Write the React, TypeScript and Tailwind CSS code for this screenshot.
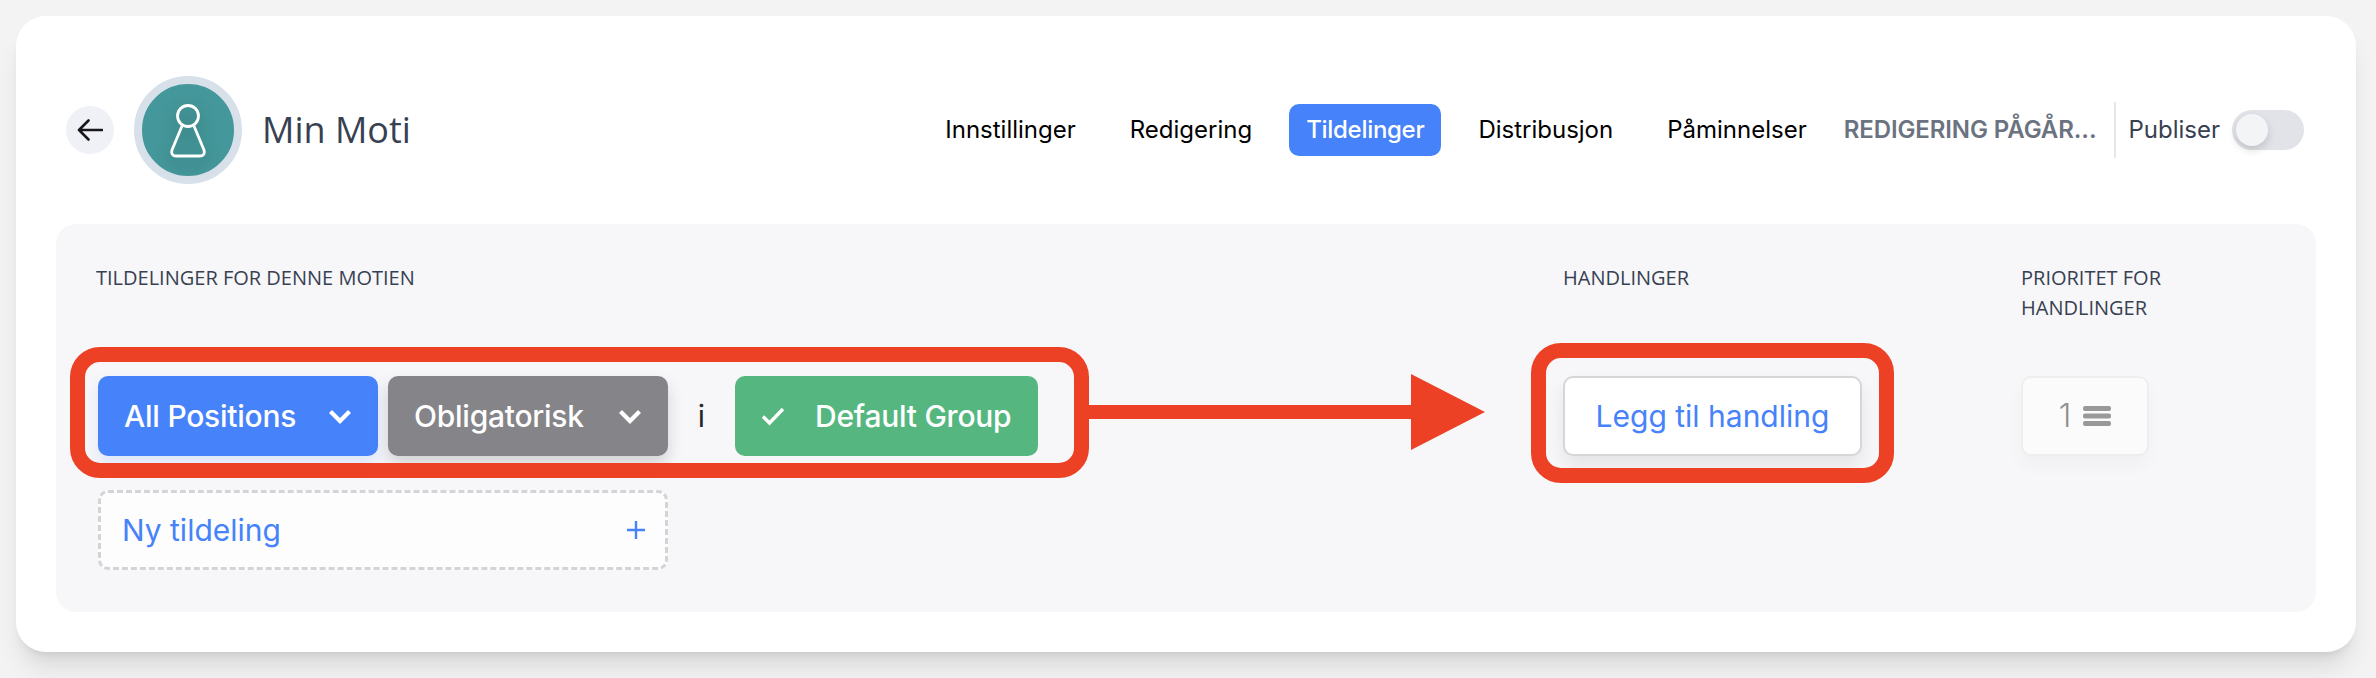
import React from "react";

const Chevron = () => (
  <svg width="24" height="15" viewBox="0 0 24 15" fill="none" className="shrink-0">
    <path d="M2.5 2.5 L12 12 L21.5 2.5" stroke="#fff" strokeWidth="4.2" />
  </svg>
);

const NavItem = ({ label, active }: { label: string; active?: boolean }) => (
  <div
    className={
      active
        ? "h-[52px] px-[17px] flex items-center rounded-[10px] bg-[#4682f9] text-white font-medium tracking-[-0.3px]"
        : "h-[52px] px-[17px] flex items-center text-black"
    }
  >
    {label}
  </div>
);

export default function App() {
  return (
    <div className="h-[678px] w-[2376px] overflow-hidden bg-[#f3f3f3] pl-4 pt-4 font-['Inter',sans-serif]">
      <div className="w-[2340px] rounded-[30px] bg-white pl-10 pr-10 pb-10 pt-[60px] shadow-xl">
        <header className="flex h-[108px] items-center pl-[10px] pr-3">
          <button className="flex h-12 w-12 items-center justify-center rounded-full bg-[#f0f1f6]">
            <svg width="26" height="22" viewBox="0 0 26 22" fill="none">
              <path d="M25 11 H2 M11.5 1.5 L2 11 L11.5 20.5" stroke="#18181b" strokeWidth="2.6" strokeLinecap="round" strokeLinejoin="round" />
            </svg>
          </button>
          <div className="ml-5 flex h-[108px] w-[108px] items-center justify-center rounded-full border-8 border-[#d8e0ea] bg-[#44979a]">
            <svg width="38" height="56" viewBox="0 0 38 56" fill="none" className="mt-[1px] drop-shadow-[0_6px_8px_rgba(0,0,0,0.25)]">
              <circle cx="19" cy="13" r="10.5" stroke="#fff" strokeWidth="2.8" />
              <path d="M13 23 L3 47 C2 50.5 3.5 53 6.5 53 H31.5 C34.5 53 36 50.5 35 47 L25 23" stroke="#fff" strokeWidth="2.8" strokeLinejoin="round" />
            </svg>
          </div>
          <h1 className="ml-5 font-['Open_Sans',sans-serif] text-[36px] leading-none text-[#374151]">Min Moti</h1>
          <nav className="ml-auto flex items-center gap-5 text-[24px]">
            <NavItem label="Innstillinger" />
            <NavItem label="Redigering" />
            <NavItem label="Tildelinger" active />
            <NavItem label="Distribusjon" />
            <NavItem label="Påminnelser" />
          </nav>
          <span className="ml-5 text-[24px] font-semibold tracking-[-0.1px] text-[#6b7280]">REDIGERING PÅGÅR...</span>
          <div className="ml-[18px] h-14 w-[2px] bg-[#e5e7eb]" />
          <span className="ml-3 text-[24px] text-[#374151]">Publiser</span>
          <div className="ml-3 flex h-10 w-[72px] items-center rounded-full bg-[#e2e3e8] pl-1">
            <div className="h-8 w-8 rounded-full bg-[#f3f4f6] shadow-[0_4px_8px_rgba(0,0,0,0.15)]" />
          </div>
        </header>

        <section className="relative mt-10 flex h-[388px] rounded-[20px] bg-[#f7f7f9] px-10 pt-[39px] font-['Open_Sans',sans-serif] text-[20px] leading-[30px] text-[#374151]">
          <div className="w-[1466px]">
            <div className="h-[61px]">TILDELINGER FOR DENNE MOTIEN</div>
            <div className="mt-[52px] flex items-center gap-[10px] pl-[2px] font-['Inter',sans-serif]">
              <button className="flex h-20 w-[280px] items-center justify-between rounded-[10px] bg-[#4682f9] px-[26px] text-[30px] font-medium tracking-[-0.25px] text-white shadow-[0_8px_16px_rgba(70,130,249,0.15)]">
                All Positions
                <Chevron />
              </button>
              <button className="flex h-20 w-[280px] items-center justify-between rounded-[10px] bg-[#858488] px-[26px] text-[30px] font-medium tracking-[-0.25px] text-white shadow-[0_8px_16px_rgba(0,0,0,0.15)]">
                Obligatorisk
                <Chevron />
              </button>
              <span className="w-[47px] text-center text-[30px] text-[#27272a]">i</span>
              <button className="flex h-20 w-[303px] items-center rounded-[10px] bg-[#55b77f] pl-[26px] text-[30px] font-medium tracking-[-0.25px] text-white">
                <svg width="24" height="19" viewBox="0 0 24 19" fill="none" className="mr-[30px]">
                  <path d="M2 9.5 L8.5 16 L22 2" stroke="#fff" strokeWidth="3.4" />
                </svg>
                Default Group
              </button>
            </div>
            <button className="ml-[2px] mt-[34px] flex h-[80px] w-[570px] items-center justify-between rounded-[10px] border-[3px] border-dashed border-[#d4d4d8] bg-[#fdfdfd] pl-[21px] pr-[20px] font-['Inter',sans-serif] text-[30px] text-[#4682f9]">
              Ny tildeling
              <svg width="18" height="18" viewBox="0 0 18 18" fill="none">
                <path d="M9 0 V18 M0 9 H18" stroke="#4682f9" strokeWidth="2.4" />
              </svg>
            </button>
          </div>

          <div className="w-[459px]">
            <div className="h-[61px] pl-px">HANDLINGER</div>
            <button className="ml-px mt-[52px] h-20 w-[299px] rounded-[10px] border-2 border-[#d6d6d6] bg-white font-['Inter',sans-serif] text-[30px] text-[#4682f9] shadow-[0_10px_18px_rgba(0,0,0,0.08)]">
              Legg til handling
            </button>
          </div>

          <div className="w-[240px]">
            <div className="h-[61px]">
              PRIORITET FOR
              <br />
              HANDLINGER
            </div>
            <div className="mt-[52px] flex h-20 w-[128px] items-center justify-center gap-3 rounded-[10px] border-2 border-[#eeeeee] bg-[#fbfbfb] font-['Inter',sans-serif] text-[32px] font-light text-[#8f8f8f] shadow-[0_10px_18px_rgba(0,0,0,0.03)]">
              1
              <svg width="28" height="20" viewBox="0 0 28 20" fill="#999999">
                <rect width="28" height="5" y="0" rx="2" />
                <rect width="28" height="5" y="7.5" rx="2" />
                <rect width="28" height="5" y="15" rx="2" />
              </svg>
            </div>
          </div>

          {/* annotations over the content */}
          <div className="pointer-events-none absolute left-[14px] top-[123px] h-[131px] w-[1019px] rounded-[30px] border-[15px] border-[#ec4125]" />
          <div className="pointer-events-none absolute left-[1475px] top-[119px] h-[140px] w-[363px] rounded-[30px] border-[15px] border-[#ec4125]" />
          <svg className="pointer-events-none absolute left-[1033px] top-[150px]" width="400" height="76" viewBox="0 0 400 76">
            <path d="M0 31 H322 V0 L396 38 L322 76 V45 H0 Z" fill="#ec4125" />
          </svg>
        </section>
      </div>
    </div>
  );
}
